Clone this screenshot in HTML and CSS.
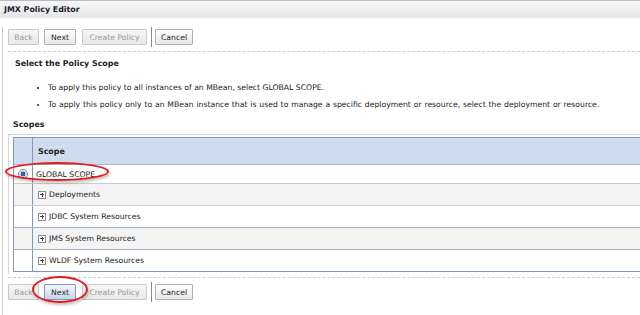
FILE: index.html
```html
<!DOCTYPE html>
<html>
<head>
<meta charset="utf-8">
<title>JMX Policy Editor</title>
<link rel="stylesheet" href="styles.css">
</head>
<body>
<div class="titlebar"><span class="title">JMX Policy Editor</span></div>
<div class="panel">
  <div class="btnbar btnbar-top">
    <span class="btn btn-back disabled">Back</span>
    <span class="btn btn-next">Next</span>
    <span class="btn btn-create disabled">Create Policy</span>
    <span class="sep"></span>
    <span class="btn btn-cancel">Cancel</span>
  </div>
  <div class="dash"></div>
  <h2 class="heading">Select the Policy Scope</h2>
  <ul class="bullets">
    <li>To apply this policy to all instances of an MBean, select GLOBAL SCOPE.</li>
    <li class="wide">To apply this policy only to an MBean instance that is used to manage a specific deployment or resource, select the deployment or resource.</li>
  </ul>
  <h3 class="subheading">Scopes</h3>
  <div class="tablewrap">
    <div class="grid">
      <div class="row row-head"><div class="sel"></div><div class="cell head-cell">Scope</div></div>
      <div class="row row-global"><div class="sel"><span class="radio"></span></div><div class="cell global-cell">GLOBAL SCOPE</div></div>
      <div class="row row-alt"><div class="sel"></div><div class="cell tree-cell"><span class="plus"></span>Deployments</div></div>
      <div class="row"><div class="sel"></div><div class="cell tree-cell"><span class="plus"></span>JDBC System Resources</div></div>
      <div class="row row-alt row-blue"><div class="sel"></div><div class="cell tree-cell"><span class="plus"></span>JMS System Resources</div></div>
      <div class="row row-last"><div class="sel"></div><div class="cell tree-cell"><span class="plus"></span>WLDF System Resources</div></div>
    </div>
  </div>
  <div class="dash dash-bottom"></div>
  <div class="btnbar btnbar-bottom">
    <span class="btn btn-back disabled">Back</span>
    <span class="btn btn-next active">Next</span>
    <span class="btn btn-create disabled">Create Policy</span>
    <span class="sep"></span>
    <span class="btn btn-cancel">Cancel</span>
  </div>
</div>
<div class="mark mark-global"></div>
<div class="mark mark-next"></div>
</body>
</html>
```

FILE: styles.css
```css
html, body {
  margin: 0;
  padding: 0;
  background: #ffffff;
}
body {
  width: 640px;
  height: 315px;
  overflow: hidden;
  position: relative;
  font-family: "DejaVu Sans", Verdana, sans-serif;
  font-size: 7.7px;
  color: #222222;
}
.titlebar {
  height: 17px;
  border-top: 1px solid #b9bdc1;
  background: linear-gradient(#f7f7f7, #e3e5e7);
  display: flex;
  align-items: center;
  padding-left: 4px;
}
.title {
  font-weight: bold;
  font-size: 7.9px;
  color: #1e2330;
}
.panel {
  margin-left: 2px;
  border-left: 1px solid #cfcfcf;
  padding-left: 5px;
  height: 297px;
}
.btnbar {
  display: flex;
  align-items: center;
  height: 20px;
}
.btnbar-top {
  margin-top: 9px;
}
.btn {
  box-sizing: border-box;
  height: 16px;
  display: flex;
  align-items: center;
  justify-content: center;
  border: 1px solid #aeb0b2;
  border-radius: 1px;
  background: linear-gradient(#ffffff, #e7e7e7);
  color: #1a1a1a;
  margin-right: 5px;
}
.btn.disabled {
  color: #9a9a9a;
  border-color: #c8c8c8;
  background: linear-gradient(#f6f6f6, #e9e9e9);
}
.btn-back { width: 31px; }
.btn-next { width: 32px; }
.btn-create { width: 65px; margin-left: 1px; }
.btn-cancel { width: 38px; margin-right: 0; }
.btn.active {
  border-color: #8396b2;
  background: linear-gradient(#f2f6fc, #c7d6ea);
}
.sep {
  width: 1px;
  height: 20px;
  background: #8a8a8a;
  margin: 0 3px 0 -1px;
}
.dash {
  margin-top: 4px;
  border-top: 1px dashed #cfcfcf;
}
.heading {
  margin: 0;
  padding: 5px 0 0 7px;
  height: 13px;
  font-size: 7.9px;
  font-weight: bold;
  line-height: 13px;
  color: #222;
}
.bullets {
  margin: 9px 0 0 0;
  padding: 0 0 0 40px;
  line-height: 17px;
  list-style: disc;
}
.bullets li::marker {
  font-size: 7px;
}
.bullets .wide {
  word-spacing: 0.4px;
}
.subheading {
  margin: 5px 0 0 5px;
  height: 14px;
  font-size: 7.9px;
  font-weight: bold;
  line-height: 14px;
  color: #222;
}
.tablewrap {
  margin-top: 2px;
  border-top: 1px solid #d3d3d3;
  border-left: 1px solid #d8d8d8;
  padding: 2px 0 2px 4px;
}
.grid {
  border-top: 1px solid #8d9cb1;
  border-left: 1px solid #8a9ab0;
}
.row {
  display: flex;
  height: 21px;
  border-bottom: 1px solid #c9ccd3;
  background: #ffffff;
}
.row-alt {
  background: #f4f4f4;
}
.row-blue {
  border-top: 1px solid #9fb0c5;
  margin-top: -1px;
  border-bottom-color: #9fb0c5;
}
.row-last {
  border-bottom-color: #7f95af;
}
.row-head {
  height: 26px;
  background: #cfdcef;
  border-bottom: 1px solid #a9b8d0;
}
.row-global {
  height: 18px;
}
.sel {
  width: 18px;
  flex: none;
  border-right: 1px solid #8597b0;
  display: flex;
  align-items: center;
  justify-content: center;
}
.cell {
  display: flex;
  align-items: center;
  flex: 1;
}
.head-cell {
  padding-left: 5px;
  font-weight: bold;
  font-size: 7.9px;
}
.global-cell {
  padding-left: 3px;
}
.tree-cell {
  padding-left: 5px;
}
.radio {
  box-sizing: border-box;
  width: 10px;
  height: 10px;
  border-radius: 50%;
  border: 1px solid #8a8f96;
  background: radial-gradient(circle, #2f7fc6 0, #1d5b9c 2.2px, #d8dde3 2.6px, #f4f6f8 100%);
}
.plus {
  box-sizing: border-box;
  width: 8px;
  height: 8px;
  border: 1px solid #8c8c8c;
  margin-right: 3px;
  position: relative;
  background: #ffffff;
}
.plus::before, .plus::after {
  content: "";
  position: absolute;
  background: #444;
}
.plus::before {
  left: 1px;
  top: 2.5px;
  width: 4px;
  height: 1px;
}
.plus::after {
  left: 2.5px;
  top: 1px;
  width: 1px;
  height: 4px;
}
.dash-bottom {
  margin-top: 3px;
}
.btnbar-bottom {
  margin-top: 4px;
}
.mark {
  position: absolute;
  border: 2px solid #e21d1d;
  border-radius: 50%;
  box-shadow: 1px 2px 3px rgba(0, 0, 0, 0.25);
}
.mark-global {
  left: 5px;
  top: 162px;
  width: 100px;
  height: 15px;
}
.mark-next {
  left: 32px;
  top: 276px;
  width: 52px;
  height: 23px;
}
```
